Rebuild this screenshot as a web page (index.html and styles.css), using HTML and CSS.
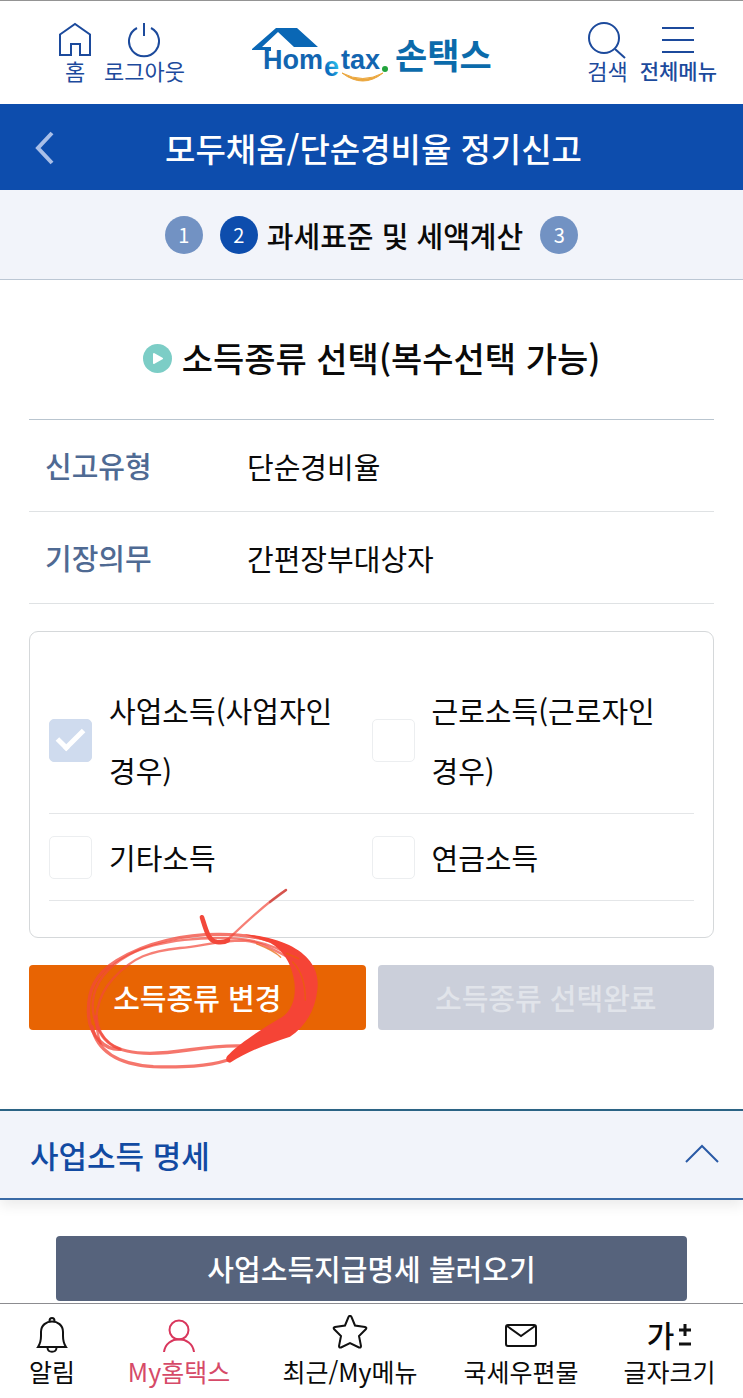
FILE: index.html
```html
<!DOCTYPE html>
<html lang="ko">
<head>
    <meta charset="UTF-8">
    <meta name="viewport" content="width=device-width, initial-scale=1.0">
    <title>모두채움/단순경비율 정기신고</title>
    <link rel="stylesheet" href="styles.css">
</head>
<body>
    <header class="top">
        <nav class="top-menu">
            <a href="#" class="top-link">
                <svg width="34" height="36" viewBox="0 0 34 36"><path d="M2 12.5 L17 2 L32 12.5 V33 H22 V22 H13 V33 H2 Z"/></svg>
                홈
            </a>
            <a href="#" class="top-link">
                <svg width="34" height="36" viewBox="0 0 34 36"><path d="M10 6 A15 15 0 1 0 24 6 M17 1 V14"/></svg>
                로그아웃
            </a>
        </nav>
        <a href="#" class="logo" aria-label="Hometax 손택스">
            <svg width="242" height="56" viewBox="0 0 242 56">
                <defs>
                    <linearGradient id="eGrad" x1="0" y1="1" x2="1" y2="0">
                        <stop offset="0.3" stop-color="#0b6fc0"/>
                        <stop offset="0.8" stop-color="#2cc4ee"/>
                    </linearGradient>
                </defs>
                <path class="roof" d="M1 22 L25 1 H46 L67 20 H43 L27 5 L11 20 H20 V24 H14 V23 H1 Z"/>
                <text class="logo-en" x="12" y="42">Hom</text>
                <text class="logo-e" x="73" y="49" fill="url(#eGrad)">e</text>
                <text class="logo-en" x="90" y="42">tax</text>
                <circle cx="134" cy="42" r="3" fill="#22a33c"/>
                <path d="M91 46 Q112 62 132 46 Q112 57 91 46 Z" fill="#eba63c" stroke="#eba63c"/>
                <text class="logo-ko" x="144" y="42">손택스</text>
            </svg>
        </a>
        <nav class="top-menu top-menu-right">
            <a href="#" class="top-link">
                <svg width="40" height="38" viewBox="0 0 40 38"><circle cx="17" cy="17" r="15"/><path d="M28 28 L38 37"/></svg>
                검색
            </a>
            <a href="#" class="top-link strong">
                <svg width="34" height="36" viewBox="0 0 34 36"><path d="M1 6 H33 M1 18 H33 M1 30 H33"/></svg>
                전체메뉴
            </a>
        </nav>
    </header>

    <div class="title-bar">
        <button class="back" aria-label="이전">
            <svg width="22" height="34" viewBox="0 0 22 34"><path d="M20 2 L6 17 L20 32"/></svg>
        </button>
        <h1>모두채움/단순경비율 정기신고</h1>
    </div>

    <ol class="steps">
        <li><span class="num">1</span></li>
        <li class="on"><span class="num">2</span>과세표준 및 세액계산</li>
        <li><span class="num">3</span></li>
    </ol>

    <main class="content">
        <h2 class="heading">
            <svg width="29" height="29" viewBox="0 0 29 29"><circle cx="14.5" cy="14.5" r="14.5" fill="#7ccdc6"/><path d="M11 10 L19 14.5 L11 19 Z" fill="#fff" stroke="#fff" stroke-width="2" stroke-linejoin="round"/></svg>
            소득종류 선택(복수선택 가능)
        </h2>

        <table class="info">
            <tr><th scope="row">신고유형</th><td>단순경비율</td></tr>
            <tr><th scope="row">기장의무</th><td>간편장부대상자</td></tr>
        </table>

        <div class="income">
            <div class="income-row">
                <label><input type="checkbox" checked disabled><span>사업소득(사업자인 경우)</span></label>
                <label><input type="checkbox" disabled><span>근로소득(근로자인 경우)</span></label>
            </div>
            <div class="income-row">
                <label><input type="checkbox" disabled><span>기타소득</span></label>
                <label><input type="checkbox" disabled><span>연금소득</span></label>
            </div>
        </div>

        <div class="actions">
            <button class="btn btn-change">소득종류 변경</button>
            <button class="btn btn-done" disabled>소득종류 선택완료</button>
            <!-- pen mark around the change button -->
            <svg class="pen" width="320" height="210" viewBox="0 0 960 630">
                <path class="thin" d="M648 60 C600 90 545 140 470 212"/>
                <path class="thin dark" d="M648 60 L600 96"/>
                <path class="thick" d="M396 142 C408 180 415 212 440 216 C455 218 466 216 474 211"/>
                <path class="mid" d="M150 538 C105 540 62 500 56 440 C50 360 78 310 140 272 C230 215 350 192 450 193 C560 193 660 222 700 262"/>
                <path class="thin" d="M148 536 C100 520 66 460 68 400 C72 340 112 290 178 254 C270 206 420 200 500 206 C580 212 640 240 680 268"/>
                <path class="thin" d="M92 520 C66 450 80 380 130 325 C190 260 240 244 330 234 C400 228 440 212 520 212 C570 215 610 238 655 262"/>
                <path class="mid" d="M78 440 C84 510 130 550 240 550 C340 550 400 524 520 528 C580 526 640 500 675 465"/>
                <path class="mid" d="M66 470 C80 540 140 584 250 590 C340 592 410 590 474 570"/>
                <path class="fill" d="M520 192 C620 200 690 232 720 274 C740 300 746 330 742 360 C736 420 706 470 660 500 C600 520 540 540 480 578 C466 576 464 562 478 552 C510 520 570 480 630 445 C676 420 680 360 670 320 C662 280 640 240 600 218 Z"/>
                <path class="gap" d="M668 276 C692 300 706 335 706 390 M560 222 C600 238 616 246 632 262 M650 250 L686 266"/>
            </svg>
        </div>
    </main>

    <section class="detail">
        <h2 class="detail-head">
            <button aria-expanded="true">
                사업소득 명세
                <svg width="34" height="24" viewBox="0 0 34 24"><path d="M1 19 L17 3 L33 19"/></svg>
            </button>
        </h2>
        <div class="detail-body">
            <button class="btn btn-load">사업소득지급명세 불러오기</button>
        </div>
    </section>

    <nav class="bottom">
        <a href="#">
            <svg width="34" height="38" viewBox="0 0 34 38"><path d="M14.500 6 A2.500 3 0 0 1 19.500 6 M3 32 C5 29 6 27 6 21 V17 C6 3 28 3 28 17 V21 C28 27 29 29 31 32 Z M12.500 33 C13 38 21 38 21.500 33"/></svg>
            알림
        </a>
        <a href="#" class="on">
            <svg width="34" height="38" viewBox="0 0 34 38"><circle cx="17" cy="15" r="9.5"/><path d="M2 37 C4 20 30 20 32 37"/></svg>
            My홈택스
        </a>
        <a href="#">
            <svg width="36" height="38" viewBox="0 0 36 38"><path d="M16.500 2 Q18 -0.500 19.500 2 L23 10.500 L33 12 Q35 12.500 34 14 L27 21 L29 31 Q29 33 27 32.500 L18 28 L9 32.500 Q7 33 7 31 L9 21 L2 14 Q1 12.500 3 12 L13 10.500 Z"/></svg>
            최근/My메뉴
        </a>
        <a href="#">
            <svg width="34" height="38" viewBox="0 0 34 38"><rect x="2" y="10" width="30" height="21" rx="2"/><path d="M3 11 L17 21 L31 11"/></svg>
            국세우편물
        </a>
        <a href="#">
            <span class="glyph">가<svg width="14" height="24" viewBox="0 0 14 24"><path d="M1 8 H13 M7 2 V14 M1 22 H13"/></svg></span>
            글자크기
        </a>
    </nav>
</body>
</html>
```
FILE: styles.css
```css
* {
    box-sizing: border-box;
}

body {
    margin: 0;
    min-height: 100vh;
    display: flex;
    flex-direction: column;
    background-color: #fff;
    color: #0a0a0a;
    font-family: 'Noto Sans CJK KR', sans-serif;
    font-size: 29px;
    word-break: keep-all;
}

h1, h2, ol {
    margin: 0;
    padding: 0;
}

a {
    color: inherit;
    text-decoration: none;
}

button {
    font-family: inherit;
    font-size: inherit;
    border: none;
    cursor: pointer;
}

svg {
    fill: none;
    flex-shrink: 0;
}

/* top menu */
.top {
    display: grid;
    grid-template-columns: 1fr auto 1fr;
    height: 104px;
    padding: 20px 26px 0;
    border-top: 1px solid #949494;
}

.top-menu {
    display: flex;
    gap: 12px;
    padding-left: 32px;
}

.top-menu-right {
    justify-content: flex-end;
    padding-left: 0;
}

.top-link {
    display: flex;
    flex-direction: column;
    align-items: center;
    color: #1c4a9c;
    font-size: 22px;
    line-height: 22px;
}

.top-link svg {
    height: 38px;
    stroke: #1c4a9c;
    stroke-width: 2;
}

.strong {
    font-size: 21px;
    font-weight: 500;
}

.logo {
    padding-top: 6px;
}

.roof {
    fill: #0a67b5;
}

.logo-en, .logo-e {
    font-family: 'Liberation Sans', sans-serif;
    font-weight: bold;
    font-size: 27px;
}

.logo-en {
    fill: #1265b0;
}

.logo-ko {
    font-weight: bold;
    font-size: 35px;
    fill: #0b6bab;
}

/* page title */
.title-bar {
    display: flex;
    align-items: center;
    height: 86px;
    padding: 2px 32px 0;
    background-color: #0d4dad;
    color: #fff;
}

.title-bar h1 {
    flex: 1;
    padding-right: 18px;
    font-size: 33px;
    font-weight: 500;
    text-align: center;
}

.back {
    display: flex;
    padding: 0;
    background: none;
}

.back svg {
    stroke: #a9bfe8;
    stroke-width: 4;
}

.steps {
    display: flex;
    justify-content: center;
    align-items: center;
    gap: 17px;
    height: 90px;
    list-style: none;
    background-color: #f2f4fa;
    border-bottom: 1px solid #bcc7d4;
    font-weight: 500;
}

.steps li {
    display: flex;
    align-items: center;
    gap: 9px;
}

.num {
    width: 38px;
    border-radius: 50%;
    background-color: #7292c3;
    color: #fff;
    font-size: 20px;
    font-weight: 400;
    line-height: 38px;
    text-align: center;
}

.on .num {
    background-color: #0d4dad;
}

/* content */
.content {
    padding: 48px 29px 0;
}

.heading {
    display: flex;
    justify-content: center;
    align-items: center;
    gap: 10px;
    margin-bottom: 31px;
    font-size: 34px;
    font-weight: 500;
    line-height: 60px;
}

.info {
    width: 100%;
    border-collapse: collapse;
    border-top: 1px solid #b9c5cf;
}

.info tr {
    border-bottom: 1px solid #dfe2e4;
}

.info th {
    width: 218px;
    padding: 15px 0 15px 16px;
    color: #4f6a93;
    font-weight: 500;
    line-height: 61px;
    text-align: left;
}

.info td {
    padding: 0;
}

.income {
    margin: 27px 0;
    padding: 35px 19px 36px;
    border: 1px solid #d5d8da;
    border-radius: 9px;
}

.income-row {
    display: flex;
    padding: 13px 0;
    border-bottom: 1px solid #e4e6e8;
    line-height: 60px;
}

.income-row label {
    display: flex;
    flex: 1;
    align-items: center;
    gap: 17px;
}

.income input {
    appearance: none;
    flex-shrink: 0;
    display: grid;
    width: 43px;
    height: 43px;
    margin: 0;
    border: 1px solid #eceef0;
    border-radius: 5px;
    background-color: #fff;
}

.income input:checked {
    border-color: #cfdbee;
    background-color: #cfdbee;
}

.income input:checked::after {
    content: '';
    box-sizing: border-box;
    place-self: center;
    width: 27px;
    height: 15px;
    margin-bottom: 7px;
    border-left: 5px solid #fff;
    border-bottom: 5px solid #fff;
    transform: rotate(-45deg);
}

.btn {
    border-radius: 4px;
    color: #fff;
    font-weight: 500;
    line-height: 65px;
    padding: 0;
}

.actions {
    position: relative;
    display: flex;
    gap: 12px;
}

.actions .btn {
    flex: 1;
}

.btn-change {
    background-color: #e86403;
}

.btn-done {
    background-color: #cbcfda;
    color: #e1e4ea;
}

.pen {
    position: absolute;
    left: 41px;
    top: -95px;
    stroke: #f2483b;
    stroke-linecap: round;
    pointer-events: none;
}

.thin {
    stroke-width: 7;
    opacity: 0.7;
}

.mid {
    stroke-width: 10;
    opacity: 0.75;
}

.thick {
    stroke-width: 14;
}

.dark {
    stroke: #c8403c;
}

.fill {
    fill: #f54436;
    stroke: none;
}

.gap {
    stroke: #e86403;
    stroke-width: 4;
    opacity: 0.7;
}

/* business income */
.detail {
    margin-top: 79px;
}

.detail-head {
    background-color: #f2f4fa;
    border-top: 2px solid #2b6384;
    border-bottom: 2px solid #3a6aa6;
    box-shadow: 0 6px 12px rgba(0, 0, 0, 0.08);
}

.detail-head button {
    display: flex;
    justify-content: space-between;
    align-items: center;
    width: 100%;
    padding: 0 24px 0 30px;
    background: none;
    color: #124aa2;
    font-size: 31px;
    font-weight: 500;
    line-height: 87px;
}

.detail-head svg {
    stroke: #2a5aa6;
    stroke-width: 2;
}

.detail-body {
    padding: 36px 56px 2px;
}

.btn-load {
    width: 100%;
    background-color: #56637c;
}

/* bottom menu */
.bottom {
    position: sticky;
    bottom: 0;
    display: grid;
    grid-template-columns: 104fr 150fr 192fr 150fr 147fr;
    height: 95px;
    margin-top: auto;
    padding-top: 11px;
    background-color: #fff;
    border-top: 1px solid #8c8c90;
}

.bottom a {
    display: flex;
    flex-direction: column;
    align-items: center;
    font-size: 25px;
    line-height: 36px;
    white-space: nowrap;
}

.bottom svg {
    stroke: #111;
    stroke-width: 2;
}

.bottom .on {
    color: #d64a68;
}

.bottom .on svg {
    stroke: #d9365c;
}

.glyph {
    display: flex;
    align-items: center;
    gap: 4px;
    height: 38px;
    font-size: 30px;
    font-weight: 500;
}

.glyph svg {
    stroke-width: 3;
}
```
